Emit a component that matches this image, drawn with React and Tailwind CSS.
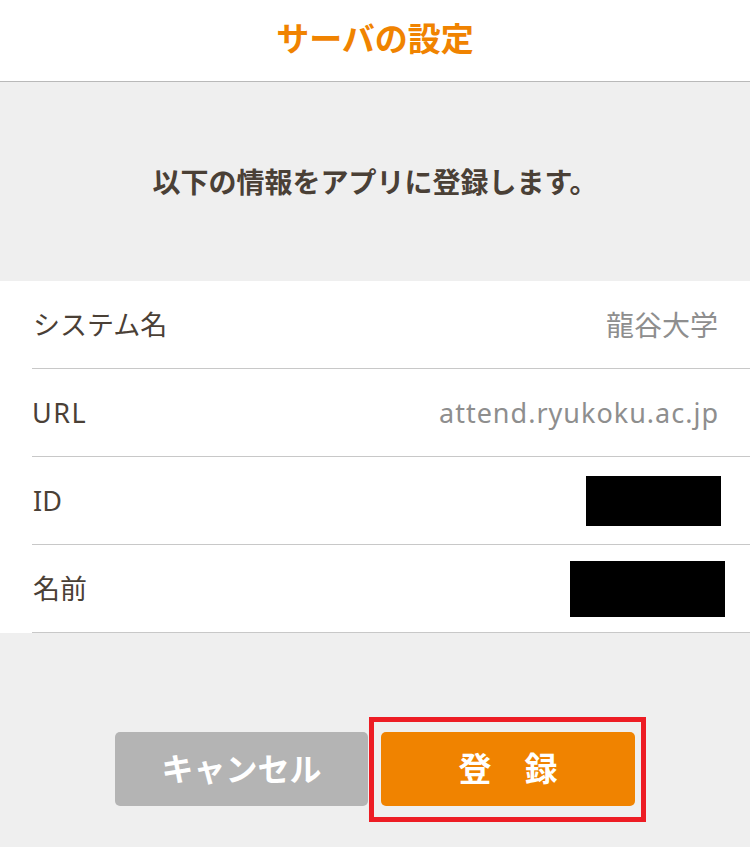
const rows = [
  { label: 'システム名', value: '龍谷大学' },
  { label: 'URL', value: 'attend.ryukoku.ac.jp', latin: true },
  { label: 'ID', mask: 'w-[135px] h-[50px] mr-[-3px]' },
  { label: '名前', mask: 'w-[155px] h-[56px] mr-[-7px]' },
];

export default function App() {
  return (
    <div
      className="min-h-screen bg-[#efefef] flex flex-col"
      style={{ fontFamily: '"Noto Sans", "Noto Sans CJK JP", sans-serif' }}
    >
      {/* Header */}
      <header className="h-[82px] bg-white border-b border-[#b9b9b9] flex items-center justify-center">
        <h1 className="text-[33px] font-bold text-[#f08300] leading-none mb-[4px]">
          サーバの設定
        </h1>
      </header>

      {/* Message */}
      <div className="h-[199px] flex items-center justify-center">
        <p className="text-[28px] font-bold text-[#4a4036] leading-none">
          以下の情報をアプリに登録します。
        </p>
      </div>

      {/* Info list */}
      <div className="bg-white pl-[32px]">
        {rows.map((row) => (
          <div
            key={row.label}
            className="h-[88px] border-b border-[#c8c8c8] flex items-center justify-between pr-[32px]"
          >
            <span
              className={`text-[27px] text-[#4a4036] leading-none ${
                row.latin ? 'tracking-[1.5px] pl-0' : 'pl-[1px]'
              }`}
            >
              {row.label}
            </span>
            {row.mask ? (
              <span className={`bg-black ${row.mask}`} />
            ) : (
              <span
                className={`text-[#8e8e8e] leading-none ${
                  row.latin ? 'text-[27px] tracking-[1px] mr-[-1px]' : 'text-[28px]'
                }`}
              >
                {row.value}
              </span>
            )}
          </div>
        ))}
      </div>

      {/* Buttons */}
      <div className="mt-[99px] flex justify-center gap-[13px]">
        <button className="w-[253px] h-[74px] rounded-[5px] bg-[#b4b4b4] text-white text-[32px] font-bold">
          キャンセル
        </button>
        <div className="relative">
          <button className="w-[254px] h-[74px] rounded-[5px] bg-[#f08300] text-white text-[33px] font-bold">
            登　録
          </button>
          <div className="absolute -top-[15px] -left-[12px] -right-[11px] -bottom-[16px] border-[5px] border-[#ed1c24] pointer-events-none" />
        </div>
      </div>
    </div>
  );
}
